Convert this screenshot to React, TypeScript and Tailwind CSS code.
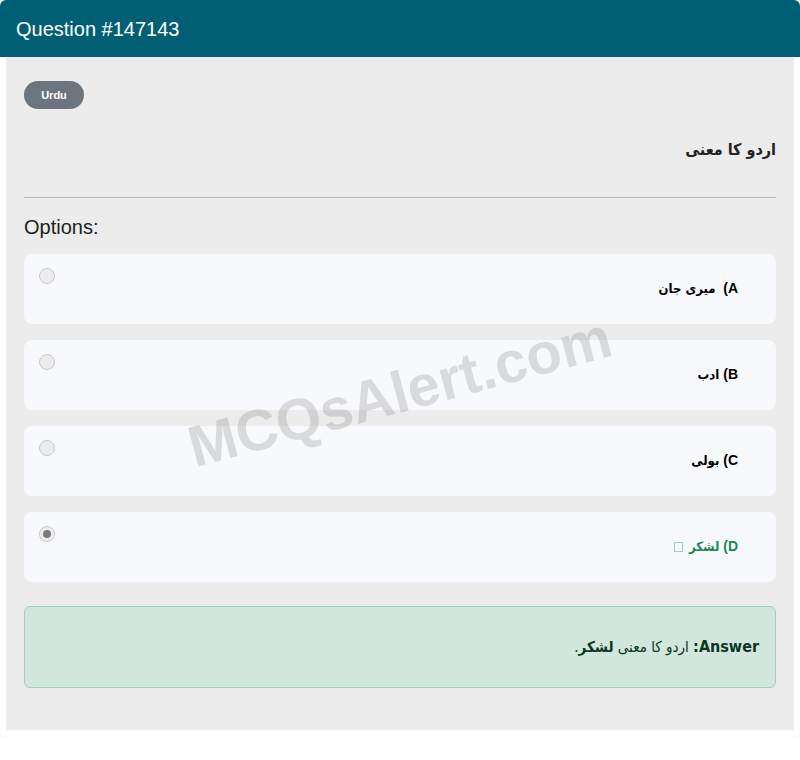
import React from "react";

const options = [
  { key: "A", text: "میری جان", correct: false },
  { key: "B", text: "ادب", correct: false },
  { key: "C", text: "بولی", correct: false },
  { key: "D", text: "لشکر", correct: true },
];

const ar = { fontFamily: '"DejaVu Sans Condensed", "DejaVu Sans", sans-serif' };

export default function App() {
  return (
    <div className="w-[800px] bg-white" style={{ fontFamily: '"Liberation Sans", "DejaVu Sans", Arial, sans-serif' }}>
      <div className="relative rounded-b-[8px] pb-[8px] shadow-[0_1px_3px_rgba(0,0,0,0.08)]">
        <div className="h-[57px] bg-[#005f73] rounded-t-[6px] flex items-center px-[16px]">
          <span className="text-white text-[20px]">Question #147143</span>
        </div>
        <div className="mx-[6px] bg-[#ececec] px-[18px] pt-[24px] pb-[42px]">
          <div className="flex">
            <span className="h-[28px] w-[60px] rounded-full bg-[#6c757d] text-white text-[11px] font-bold flex items-center justify-center">
              Urdu
            </span>
          </div>
          <div dir="rtl" className="mt-[29px] text-[16px] font-bold text-[#222] leading-[24px]" style={ar}>
            اردو کا معنی
          </div>
          <div className="mt-[35px] h-px bg-[#bdbdbd]" />
          <div className="mt-[17px] text-[20px] text-[#222] leading-[24px]">Options:</div>
          <div className="mt-[15px] flex flex-col gap-[16px]">
            {options.map((o) => (
              <div key={o.key} className="h-[70px] rounded-[8px] bg-[#f8f9fc] flex items-start pl-[15px] pt-[14px] pr-[38px]">
                <span className="h-[16px] w-[16px] rounded-full border border-[#c9c9c9] bg-[#ececec] flex items-center justify-center shrink-0">
                  {o.correct && <span className="h-[8px] w-[8px] rounded-full bg-[#7a7a7a]" />}
                </span>
                <div
                  dir="rtl"
                  className={
                    "flex-1 self-center -mt-[16px] text-[14px] font-bold " +
                    (o.correct ? "text-[#198754]" : "text-black")
                  }
                >
                  {o.key}){o.key === "A" ? "\u00a0 " : " "}
                  <span className="text-[13px]" style={ar}>{o.text}</span>
                  {o.correct && (
                    <span className="inline-block align-middle mr-[6px] h-[10px] w-[9px] border border-[#a3cfbb]" />
                  )}
                </div>
              </div>
            ))}
          </div>
          <div
            dir="rtl"
            className="mt-[24px] h-[82px] rounded-[6px] border border-[#a3cfbb] bg-[#d1e7dd] flex items-center pr-[16px] text-[#0a3622] text-[15px]"
            style={{ fontFamily: '"Liberation Sans Narrow", "DejaVu Sans Condensed", "Liberation Sans", sans-serif' }}
          >
            <span>
              <b className="text-[16px]">Answer:</b> اردو کا معنی <b>لشکر</b>.
            </span>
          </div>
        </div>
        <div className="pointer-events-none absolute left-0 top-0 w-full h-full flex items-start justify-center">
          <span
            className="mt-[348px] text-[58px] font-bold text-[rgba(110,110,110,0.22)] whitespace-nowrap"
            style={{ transform: "rotate(-15deg)", fontFamily: '"Liberation Sans", Arial, sans-serif' }}
          >
            MCQsAlert.com
          </span>
        </div>
      </div>
    </div>
  );
}
